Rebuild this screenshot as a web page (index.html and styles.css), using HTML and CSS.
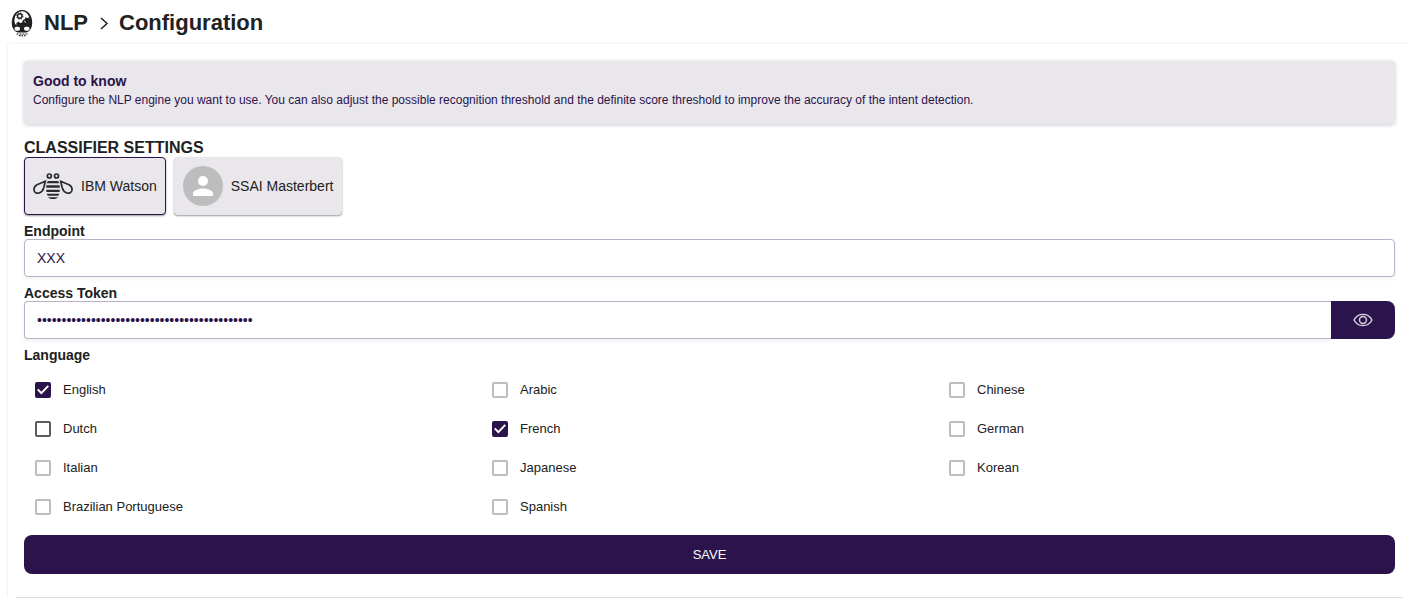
FILE: index.html
```html
<!DOCTYPE html>
<html lang="en">
<head>
<meta charset="utf-8">
<title>NLP Configuration</title>
<link rel="stylesheet" href="styles.css">
</head>
<body>
<header class="page-header">
  <svg class="logo" viewBox="0 0 22 28" aria-hidden="true">
    <path d="M11 1C4.500 1 .8 7 .8 13.500c0 5 2 8.500 5.200 9.500h10c3.200-1 5.200-4.500 5.200-9.500C21.200 7 17.500 1 11 1z" fill="#212121"/>
    <path d="M11 2.200C6.500 2.200 4 6 3.500 10.500c-.2 3 .5 5 2 6.500h11c1.500-1.500 2.200-3.500 2-6.500C18 6 15.500 2.200 11 2.200z" fill="#fff"/>
    <circle cx="8.800" cy="7" r="2.200" fill="none" stroke="#212121" stroke-width="1.400"/>
    <circle cx="8.800" cy="7" r="3.200" fill="none" stroke="#212121" stroke-width="1" stroke-dasharray="1.300 1.210"/>
    <path d="M12 11l2-1 .5-2 1.500 1 2-.5 1 2v6l-2 2H7l-.5-3-1.500-1 2.500-2 1.500 1.500 2-.5z" fill="#212121"/>
    <path d="M13 12l2 1.500" stroke="#fff" stroke-width=".8"/>
    <path d="M1.500 16c5.500-1.500 13.500-1.500 19 0l-2 5.500-3 2h-9l-3-2z" fill="#212121"/>
    <rect x="3.500" y="17.800" width="5.500" height="4" rx="1.800" fill="#fff"/>
    <rect x="13" y="17.800" width="5.500" height="4" rx="1.800" fill="#fff"/>
    <path d="M5 24.500h12" stroke="#fff" stroke-width="1"/>
    <path d="M5.500 25h2M8.500 25h2M11.500 25h2M14.500 25h2M8 26.700h1.500M10.500 26.700H12M13 26.700h1.500" stroke="#212121" stroke-width="1.200"/>
  </svg>
  <h1 class="title">NLP</h1>
  <svg class="chevron" viewBox="0 0 10 16" aria-hidden="true"><path d="M2 3l6 5.500L2 14" fill="none" stroke="#212121" stroke-width="1.500"/></svg>
  <h1 class="title">Configuration</h1>
</header>
<main class="card">
  <section class="notice">
    <h2 class="notice-title">Good to know</h2>
    <p class="notice-text">Configure the NLP engine you want to use. You can also adjust the possible recognition threshold and the definite score threshold to improve the accuracy of the intent detection.</p>
  </section>
  <form class="form">
    <h2 class="section-title">CLASSIFIER SETTINGS</h2>
    <div class="engines">
      <button type="button" class="engine engine-selected">
        <svg class="avatar" viewBox="0 0 40 40" aria-hidden="true">
          <g fill="none" stroke="#2b2b2b" stroke-width="1.700">
            <circle cx="16.300" cy="10" r="2"/><circle cx="23.500" cy="10" r="2"/>
            <path d="M12.300 15.300L4 18.700C1.500 20 .8 22 1 24c.3 2.500 2.500 3.600 5 3 2.500-.8 4-2.500 4.700-5z"/>
            <path d="M27.700 15.300L36 18.700c2.500 1.300 3.200 3.300 3 5.300-.3 2.500-2.500 3.600-5 3-2.500-.8-4-2.500-4.700-5z"/>
          </g>
          <path d="M15 15h10l1.500 2.200h-13zM13.300 19.300h13.400v2.400H13.300zM13.300 23.800h13.400V26H13.300zM13.700 27.800h12.600l-1 2H14.700zM15 31.200h10c-1.500 2.400-8.500 2.400-10 0z" fill="#2b2b2b"/>
        </svg>
        <span>IBM Watson</span>
      </button>
      <button type="button" class="engine">
        <svg class="avatar" viewBox="0 0 40 40" aria-hidden="true"><circle cx="20" cy="20" r="20" fill="#bdbdbd"/><circle cx="20" cy="15" r="5" fill="#fff"/><path d="M10 30v-2.500c0-3.300 6.700-5 10-5s10 1.700 10 5V30z" fill="#fff"/></svg>
        <span>SSAI Masterbert</span>
      </button>
    </div>
    <label class="field-label" for="endpoint">Endpoint</label>
    <input class="field" id="endpoint" type="text" value="XXX">
    <label class="field-label" for="token">Access Token</label>
    <div class="field-group">
      <input class="field field-joined" id="token" type="password" value="00000000000000000000000000000000000000000000">
      <button type="button" class="reveal" aria-label="Show token">
        <svg class="eye" viewBox="0 0 20 14" aria-hidden="true"><path d="M1 7c4-7.500 14-7.500 18 0-4 7.500-14 7.500-18 0z"/><circle cx="10" cy="7" r="3.500"/></svg>
      </button>
    </div>
    <fieldset class="languages">
      <legend class="field-label">Language</legend>
      <div class="language-grid">
        <label class="option"><input class="check" type="checkbox" checked>English</label>
        <label class="option"><input class="check check-muted" type="checkbox">Arabic</label>
        <label class="option"><input class="check check-muted" type="checkbox">Chinese</label>
        <label class="option"><input class="check" type="checkbox">Dutch</label>
        <label class="option"><input class="check" type="checkbox" checked>French</label>
        <label class="option"><input class="check check-muted" type="checkbox">German</label>
        <label class="option"><input class="check check-muted" type="checkbox">Italian</label>
        <label class="option"><input class="check check-muted" type="checkbox">Japanese</label>
        <label class="option"><input class="check check-muted" type="checkbox">Korean</label>
        <label class="option"><input class="check check-muted" type="checkbox">Brazilian Portuguese</label>
        <label class="option"><input class="check check-muted" type="checkbox">Spanish</label>
      </div>
    </fieldset>
    <button type="submit" class="save">SAVE</button>
  </form>
  <hr class="divider">
</main>
</body>
</html>
```
FILE: styles.css
```css
* { box-sizing: border-box; }
body {
  margin: 0;
  background: #fff;
  color: #212121;
  font-family: "Liberation Sans", Arial, sans-serif;
  font-size: 14px;
}
button, input { font: inherit; color: inherit; }
h1, h2, p { margin: 0; }

.page-header {
  display: flex;
  align-items: center;
  height: 44px;
  padding-top: 1px;
  padding-left: 11px;
}
.logo { width: 22px; height: 28px; margin-right: 11px; }
.title { font-size: 22px; line-height: 28px; }
.chevron { width: 10px; height: 16px; margin: 0 10px 0 11px; }

.card {
  margin-left: 8px;
  padding: 17px 13px 0 16px;
  border-radius: 4px 0 0 0;
  box-shadow: 0 0 3px rgba(0, 0, 0, 0.12);
}
.notice {
  height: 63px;
  padding: 11px 9px;
  border-radius: 4px;
  background: #e9e7ec;
  color: #2b144b;
  box-shadow: 0 1px 4px rgba(0, 0, 0, 0.2);
}
.notice-title { font-size: 14px; line-height: 18px; }
.notice-text { font-size: 12px; line-height: 20px; }

.form { display: flex; flex-direction: column; margin-top: 14px; }
.section-title { font-size: 16px; line-height: 19px; }
.engines { display: flex; gap: 8px; }
.engine {
  display: flex;
  align-items: center;
  gap: 8px;
  height: 58px;
  padding: 0 8px;
  border: 1px solid #e9e7ec;
  border-radius: 4px;
  background: #e9e7ec;
  box-shadow: 0 1px 2px rgba(0, 0, 0, 0.4);
}
.engine-selected { border-color: #2b144b; }
.avatar { width: 40px; height: 40px; }

.field-label {
  display: block;
  padding: 0;
  margin-top: 8px;
  font-weight: bold;
  line-height: 16px;
}
.field {
  width: 100%;
  height: 38px;
  padding: 0 12px;
  border: 1px solid #b8b2c6;
  border-radius: 4px;
  background: #fff;
  color: #2b144b;
  box-shadow: 0 2px 4px rgba(0, 0, 0, 0.06);
}
.field-group { display: flex; }
.field-joined { flex: 1; border-right: 0; border-radius: 4px 0 0 4px; }
.reveal {
  display: flex;
  align-items: center;
  justify-content: center;
  width: 64px;
  height: 38px;
  border: 0;
  border-radius: 0 8px 8px 0;
  background: #2b144b;
}
.eye { width: 20px; height: 14px; fill: none; stroke: #d9d5e0; stroke-width: 1.4; }

.languages { min-width: 0; margin: 8px 0 0; padding: 0; border: 0; }
.languages .field-label { margin-top: 0; }
.language-grid {
  display: grid;
  grid-template-columns: repeat(3, 1fr);
  grid-auto-rows: 39px;
  margin-top: 7px;
}
.option {
  display: flex;
  align-items: center;
  gap: 12px;
  padding-left: 11px;
  font-size: 13px;
}
.check {
  appearance: none;
  width: 16px;
  height: 16px;
  margin: 1px 0 0;
  border: 2px solid #5c5c5c;
  border-radius: 2px;
  background: #fff;
}
.check-muted { border-color: #bdbdbd; }
.check:checked {
  display: grid;
  place-items: center;
  border-color: #2b144b;
  background: #2b144b;
}
.check:checked::before {
  content: "";
  width: 12px;
  height: 10px;
  background: #fff;
  clip-path: polygon(0 50%, 12% 38%, 36% 67%, 88% 2%, 100% 14%, 36% 94%);
}
.save {
  height: 39px;
  margin-top: 9px;
  border: 0;
  border-radius: 8px;
  background: #2b144b;
  color: #fff;
  font-size: 13px;
}
.divider {
  height: 1px;
  margin: 23px -8px 0;
  border: 0;
  background: #dcdcdc;
}
```
